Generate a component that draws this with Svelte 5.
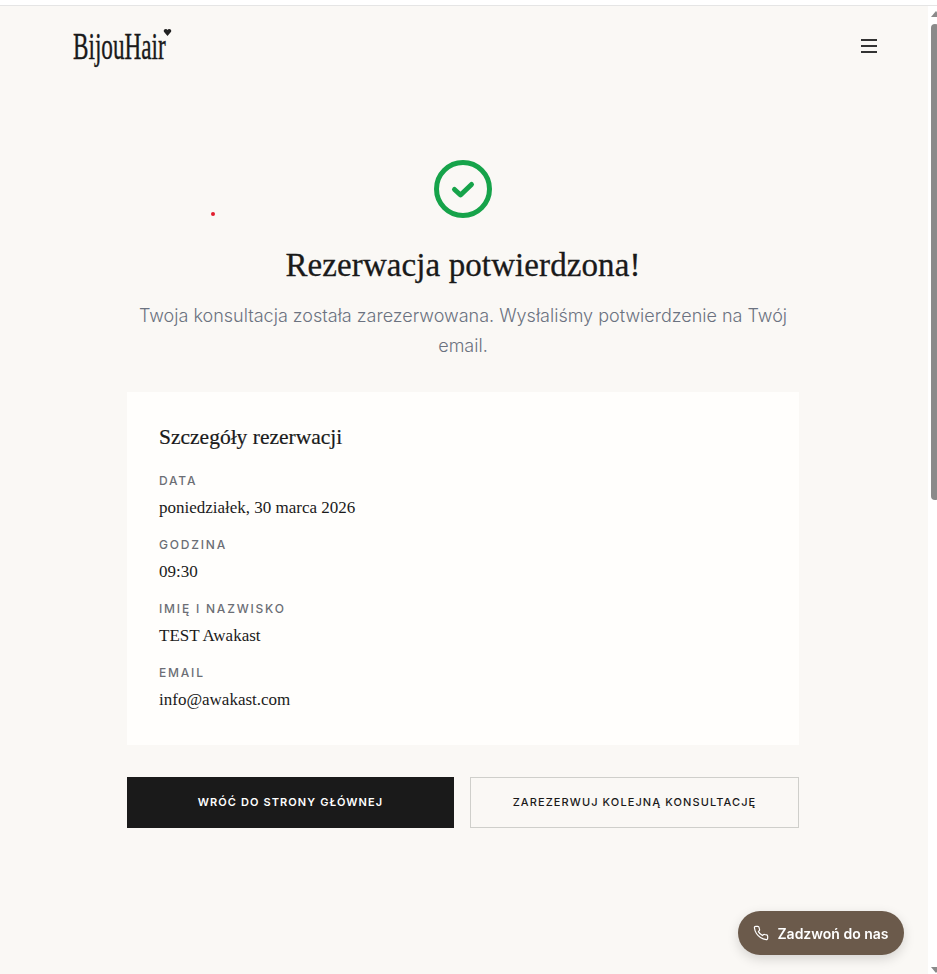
<script>
  const details = [
    { label: "Data", value: "poniedziałek, 30 marca 2026" },
    { label: "Godzina", value: "09:30" },
    { label: "Imię i nazwisko", value: "TEST Awakast" },
    { label: "Email", value: "info@awakast.com" }
  ];
</script>

<div class="topline"></div>

<div class="page">
  <header class="header">
    <a class="logo" href="#top">
      <span class="logo-text">BijouHair</span>
      <svg class="logo-heart" width="9" height="7" viewBox="0 0 9 8">
        <path d="M4.5 8 L0.4 3.2 C-0.4 1.4 1 0 2.6 0 C3.4 0 4.1 .4 4.5 1 C4.9 .4 5.6 0 6.4 0 C8 0 9.4 1.4 8.6 3.2 Z" fill="#222" />
      </svg>
    </a>
    <button class="menu" aria-label="Menu">
      <span></span><span></span><span></span>
    </button>
  </header>

  <main class="main">
    <svg class="check" width="58" height="58" viewBox="0 0 58 58" fill="none" stroke="#16a34a">
      <circle cx="29" cy="29" r="26.5" stroke-width="5" />
      <path d="M20.5 29.5 L26.5 35 L37.5 24.5" stroke-width="5" stroke-linecap="round" stroke-linejoin="round" />
    </svg>

    <h1 class="title">Rezerwacja potwierdzona!</h1>
    <p class="subtitle">Twoja konsultacja została zarezerwowana. Wysłaliśmy potwierdzenie na Twój email.</p>

    <section class="card">
      <h2 class="card-title">Szczegóły rezerwacji</h2>
      {#each details as item}
        <div class="row">
          <div class="label">{item.label}</div>
          <div class="value">{item.value}</div>
        </div>
      {/each}
    </section>

    <div class="actions">
      <button class="btn btn-dark">Wróć do strony głównej</button>
      <button class="btn btn-light">Zarezerwuj kolejną konsultację</button>
    </div>
  </main>
</div>

<span class="dot"></span>

<a class="call" href="tel:">
  <svg width="16" height="16" viewBox="0 0 24 24" fill="none" stroke="#fff" stroke-width="1.8" stroke-linecap="round" stroke-linejoin="round">
    <path d="M22 16.9v3a2 2 0 0 1-2.2 2 19.8 19.8 0 0 1-8.6-3.1 19.5 19.5 0 0 1-6-6A19.8 19.8 0 0 1 2.1 4.2 2 2 0 0 1 4.1 2h3a2 2 0 0 1 2 1.7c.1 1 .4 1.9.7 2.8a2 2 0 0 1-.5 2.1L8.1 9.9a16 16 0 0 0 6 6l1.3-1.3a2 2 0 0 1 2.1-.4c.9.3 1.8.6 2.8.7a2 2 0 0 1 1.7 2z" />
  </svg>
  Zadzwoń do nas
</a>

<div class="scrollbar">
  <span class="arrow up"></span>
  <span class="thumb"></span>
  <span class="arrow down"></span>
</div>

<style>
  :global(body) {
    margin: 0;
    background: #faf8f5;
    overflow: hidden;
  }

  .topline {
    height: 5px;
    background: #fff;
    border-bottom: 1px solid #e5e5e5;
  }

  .page {
    height: 968px;
    padding-right: 11px;
    background: #faf8f5;
    box-sizing: border-box;
  }

  .header {
    display: flex;
    justify-content: space-between;
    align-items: center;
    height: 80px;
    padding: 0 49px 0 73px;
  }

  .logo {
    position: relative;
    display: block;
    text-decoration: none;
    color: #1a1a1a;
  }

  .logo-text {
    display: block;
    width: 93px;
    font-family: "Liberation Serif", serif;
    font-size: 38px;
    line-height: 36px;
    white-space: nowrap;
    -webkit-text-stroke: 0.4px #1a1a1a;
    transform: scaleX(0.61);
    transform-origin: left center;
  }

  .logo-heart {
    position: absolute;
    left: 90px;
    top: 1px;
  }

  .menu {
    display: flex;
    flex-direction: column;
    gap: 4px;
    padding: 0;
    border: none;
    background: none;
  }

  .menu span {
    display: block;
    width: 16px;
    height: 2px;
    background: #333;
  }

  .main {
    width: 672px;
    margin: 0 auto;
    padding-top: 74px;
    display: flex;
    flex-direction: column;
    align-items: center;
  }

  .title {
    margin: 25px 0 0;
    font-family: "Liberation Serif", serif;
    font-weight: 400;
    font-size: 33px;
    line-height: 44px;
    letter-spacing: 0.1px;
    -webkit-text-stroke: 0.3px #1a1a1a;
    color: #1a1a1a;
  }

  .subtitle {
    margin: 14px 0 0;
    width: 660px;
    text-align: center;
    font-family: Inter, sans-serif;
    font-weight: 300;
    font-size: 18px;
    line-height: 30px;
    color: #6b7280;
  }

  .card {
    align-self: stretch;
    margin-top: 31px;
    padding: 31px 32px;
    height: 353px;
    box-sizing: border-box;
    background: #fffefc;
  }

  .card-title {
    margin: 0 0 22px;
    font-family: "Liberation Serif", serif;
    font-weight: 400;
    font-size: 21.5px;
    line-height: 28px;
    -webkit-text-stroke: 0.2px #1a1a1a;
    color: #1a1a1a;
  }

  .row {
    height: 64px;
  }

  .label {
    font-family: Inter, sans-serif;
    font-size: 12px;
    font-weight: 500;
    line-height: 16px;
    letter-spacing: 1.8px;
    text-transform: uppercase;
    color: #6b6e75;
  }

  .value {
    margin-top: 7px;
    font-family: "Liberation Serif", serif;
    font-size: 17px;
    line-height: 24px;
    color: #1a1a1a;
  }

  .actions {
    align-self: stretch;
    display: flex;
    gap: 16px;
    margin-top: 32px;
  }

  .btn {
    flex: 1;
    height: 51px;
    padding: 0 0 2px;
    font-family: Inter, sans-serif;
    font-size: 11px;
    font-weight: 500;
    letter-spacing: 1.1px;
    text-transform: uppercase;
  }

  .btn-dark {
    background: #1a1a1a;
    border: none;
    color: #fff;
    font-weight: 600;
  }

  .btn-light {
    background: transparent;
    border: 1px solid #cfcfcb;
    color: #1a1a1a;
  }

  .dot {
    position: absolute;
    left: 211px;
    top: 212px;
    width: 4px;
    height: 4px;
    border-radius: 50%;
    background: #e11d2e;
  }

  .call {
    position: fixed;
    left: 738px;
    top: 911px;
    width: 166px;
    height: 44px;
    box-sizing: border-box;
    display: flex;
    align-items: center;
    justify-content: center;
    gap: 8px;
    border-radius: 22px;
    background: #6b5a4b;
    color: #fff;
    font-family: Inter, sans-serif;
    font-size: 14px;
    font-weight: 600;
    text-decoration: none;
    box-shadow: 0 4px 12px rgba(0, 0, 0, 0.15);
  }

  .scrollbar {
    position: fixed;
    right: 0;
    top: 6px;
    bottom: 0;
    width: 9px;
    overflow: hidden;
    background: #fff;
  }

  .thumb {
    position: absolute;
    left: 3px;
    width: 8px;
    top: 18px;
    height: 476px;
    border-radius: 4px;
    background: #8a8a8a;
  }

  .arrow {
    position: absolute;
    left: 3px;
    width: 0;
    height: 0;
    border-left: 5px solid transparent;
    border-right: 5px solid transparent;
  }

  .arrow.up {
    top: 5px;
    border-bottom: 6px solid #8a8a8a;
  }

  .arrow.down {
    bottom: 1px;
    border-top: 6px solid #8a8a8a;
  }
</style>
